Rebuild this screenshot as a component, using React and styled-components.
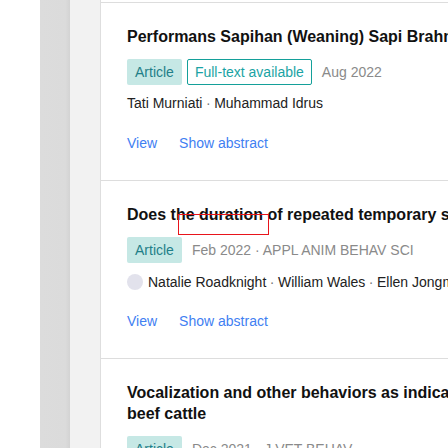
import React from 'react';
import styled, { createGlobalStyle } from 'styled-components';

const GlobalStyle = createGlobalStyle`
  html, body {
    margin: 0;
    padding: 0;
    background: #ffffff;
    overflow: hidden;
  }
  body {
    font-family: "Liberation Sans", Arial, sans-serif;
  }
`;

// Whole page: blank margin, two grey rails, then the result list
const Page = styled.div`
  display: flex;
  min-height: 448px;
  width: 448px;
  overflow: hidden;
`;

const Margin = styled.div`
  flex: 0 0 40px;
  background: #ffffff;
`;

const Rail = styled.div`
  flex: 0 0 30px;
  background: linear-gradient(to right, #dcdcdc 0%, #dbdbdb 85%, #d3d3d3 100%);
`;

const Gutter = styled.div`
  flex: 0 0 30px;
  background: #f2f2f2;
`;

const ResultList = styled.div`
  flex: 0 0 auto;
  width: 980px;
  padding-top: 2px;
  background: #ffffff;
  border-left: 1px solid #dedede;
`;

const Item = styled.div`
  border-top: 1px solid #dddddd;
  padding: 23px 0 27px 26px;
`;

const Title = styled.div`
  position: relative;
  width: 920px;
  font-size: 16px;
  line-height: 21px;
  font-weight: bold;
  color: #111111;
`;

// Red annotation box drawn over the title
const Marker = styled.span`
  position: absolute;
  left: 51px;
  top: 10px;
  width: 89px;
  height: 19px;
  border: 1px solid #e8141b;
`;

const Meta = styled.div`
  display: flex;
  align-items: center;
  margin-top: 12px;
  height: 26px;
  font-size: 14px;
`;

const Badge = styled.span`
  display: inline-flex;
  align-items: center;
  box-sizing: border-box;
  height: 26px;
  padding: 0 ${(p) => (p.$outline ? '7px' : '8px')};
  margin-right: 5px;
  border-radius: 2px;
  color: ${(p) => (p.$outline ? '#1aa3a4' : '#1f7f88')};
  background: ${(p) => (p.$outline ? '#ffffff' : '#c6e8e5')};
  border: ${(p) => (p.$outline ? '1px solid #14a09a' : 'none')};
`;

const Date = styled.span`
  margin-left: 5px;
  color: #8a8a8a;
`;

const Authors = styled.div`
  display: flex;
  align-items: center;
  margin-top: ${(p) => (p.$avatar ? '9px' : '8px')};
  height: 20px;
  font-size: 14px;
  line-height: 20px;
  color: #222222;
  white-space: nowrap;
`;

const Avatar = styled.span`
  flex: 0 0 16px;
  width: 16px;
  height: 16px;
  margin-right: 5px;
  border-radius: 50%;
  background: #e2e2ec;
`;

const Dot = styled.span`
  color: #777777;
  margin: 0 3.5px;
`;

const Actions = styled.div`
  display: flex;
  gap: 22px;
  margin-top: ${(p) => (p.$avatar ? '19px' : '20px')};
  font-size: 14px;
  line-height: 20px;
  color: #3f80f2;
`;

const items = [
  {
    title: 'Performans Sapihan (Weaning) Sapi Brahman Cross pada Peternakan Rakyat',
    fullText: true,
    date: 'Aug 2022',
    authors: ['Tati Murniati', 'Muhammad Idrus'],
  },
  {
    title:
      'Does the duration of repeated temporary separation affect welfare in dairy cow-calf contact systems?',
    marker: true,
    date: 'Feb 2022 · APPL ANIM BEHAV SCI',
    avatar: true,
    authors: ['Natalie Roadknight', 'William Wales', 'Ellen Jongman', 'Peter Hemsworth'],
  },
  {
    title:
      'Vocalization and other behaviors as indicators of emotional valence: The case of cow-to-calf separation and reunion in beef cattle',
    date: 'Dec 2021 · J VET BEHAV',
    authors: ['Gabriela Schnaider', 'Sarah Heinemann'],
  },
];

const App = () => (
  <>
    <GlobalStyle />
    <Page>
      <Margin />
      <Rail />
      <Gutter />
      <ResultList>
        {items.map((it) => (
          <Item key={it.title}>
            <Title>
              {it.title}
              {it.marker && <Marker />}
            </Title>
            <Meta>
              <Badge>Article</Badge>
              {it.fullText && <Badge $outline>Full-text available</Badge>}
              <Date>{it.date}</Date>
            </Meta>
            <Authors $avatar={it.avatar}>
              {it.avatar && <Avatar />}
              {it.authors.map((a, i) => (
                <React.Fragment key={a}>
                  {i > 0 && <Dot>·</Dot>}
                  {a}
                </React.Fragment>
              ))}
            </Authors>
            <Actions $avatar={it.avatar}>
              <span>View</span>
              <span>Show abstract</span>
            </Actions>
          </Item>
        ))}
      </ResultList>
    </Page>
  </>
);

export default App;
